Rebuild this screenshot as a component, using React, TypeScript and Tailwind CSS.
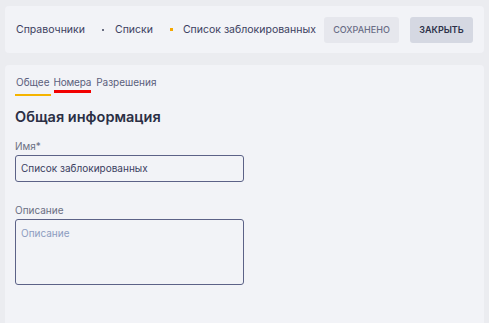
import React from 'react';

// Карточка черного списка - вкладка "Общее"
const App: React.FC = () => {
  return (
    <div className="h-[323px] w-full overflow-hidden bg-[#ebecf0] px-[5px] pt-[6px] font-['Inter',sans-serif] text-[#3b4060]">
      {/* шапка с хлебными крошками */}
      <div className="flex h-[47px] items-center rounded-[4px] bg-[#f2f3f7] pl-[11px] pr-[11px]">
        <div className="flex items-center whitespace-nowrap text-[10.5px]">
          <span>Справочники</span>
          <span className="ml-[17px] mr-[11px] h-[2px] w-[2px] bg-[#6b6f82]" />
          <span>Списки</span>
          <span className="ml-[17px] mr-[10px] h-[3px] w-[3px] bg-[#f5a800]" />
          <span>Список заблокированных</span>
        </div>
        <div className="ml-auto flex gap-[11px]">
          <button className="h-[26px] w-[75px] rounded-[3px] bg-[#e6e7ed] text-[9px] font-medium text-[#6a6d86]">
            СОХРАНЕНО
          </button>
          <button className="h-[26px] w-[63px] rounded-[3px] bg-[#d5d8e2] text-[9px] font-semibold text-[#2c3048]">
            ЗАКРЫТЬ
          </button>
        </div>
      </div>

      {/* основная карточка */}
      <div className="mt-[12px] h-[300px] rounded-[4px] bg-[#f2f3f7] px-[10px] pt-[10px]">
        <div className="flex items-start gap-[3px] text-[10px] text-[#5b607c]">
          <div className="flex flex-col">
            <span className="px-[1px]">Общее</span>
            <span className="mt-[4px] h-[2px] w-full bg-[#f5b400]" />
          </div>
          <div className="flex flex-col">
            <span className="tracking-[-0.2px]">Номера</span>
            <span className="h-[3px] w-full bg-[#f20000]" />
          </div>
          <span className="ml-[2px]">Разрешения</span>
        </div>

        <h2 className="mt-[10px] text-[14.5px] font-semibold text-[#2b2f45]">Общая информация</h2>

        <div className="mt-[11px] text-[10px] text-[#6b6f82]">Имя*</div>
        <div className="mt-[1px] flex h-[27px] w-[229px] items-center rounded-[3px] border border-[#5c6287] px-[5px] text-[10px] text-[#3b4060]">
          Список заблокированных
        </div>

        <div className="mt-[21px] text-[10px] text-[#6b6f82]">Описание</div>
        <div className="mt-[1px] h-[66px] w-[229px] rounded-[3px] border border-[#5c6287] px-[5px] pt-[6px] text-[10px] text-[#8d9cc0]">
          Описание
        </div>
      </div>
    </div>
  );
};

export default App;
